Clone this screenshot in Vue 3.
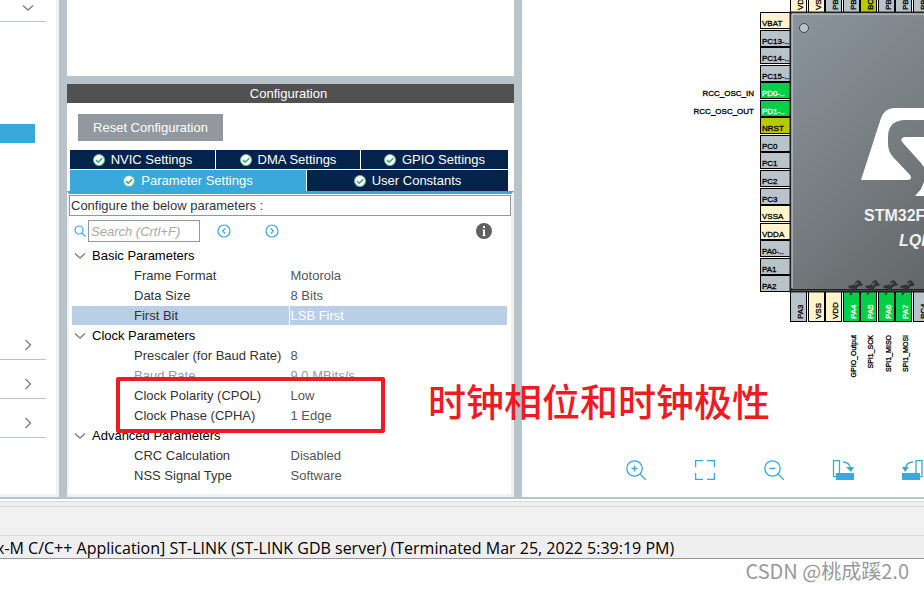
<script setup>
import { ref } from 'vue'

const search = ref('')
const selected = ref('First Bit')

const sections = ['Connectivity', 'Computing', 'Middleware']

const topTabs = ['NVIC Settings', 'DMA Settings', 'GPIO Settings']
const mainTabs = ['Parameter Settings', 'User Constants']
const activeTab = ref('Parameter Settings')

const groups = [
  {
    name: 'Basic Parameters',
    params: [
      { name: 'Frame Format', value: 'Motorola' },
      { name: 'Data Size', value: '8 Bits' },
      { name: 'First Bit', value: 'LSB First' }
    ]
  },
  {
    name: 'Clock Parameters',
    params: [
      { name: 'Prescaler (for Baud Rate)', value: '8' },
      { name: 'Baud Rate', value: '9.0 MBits/s', disabled: true },
      { name: 'Clock Polarity (CPOL)', value: 'Low' },
      { name: 'Clock Phase (CPHA)', value: '1 Edge' }
    ]
  },
  {
    name: 'Advanced Parameters',
    params: [
      { name: 'CRC Calculation', value: 'Disabled' },
      { name: 'NSS Signal Type', value: 'Software' }
    ]
  }
]

const leftPins = [
  { name: 'VBAT', type: 'power' },
  { name: 'PC13-..' },
  { name: 'PC14-..' },
  { name: 'PC15-..' },
  { name: 'PD0-..', type: 'used', label: 'RCC_OSC_IN' },
  { name: 'PD1-..', type: 'used', label: 'RCC_OSC_OUT' },
  { name: 'NRST', type: 'reset' },
  { name: 'PC0' },
  { name: 'PC1' },
  { name: 'PC2' },
  { name: 'PC3' },
  { name: 'VSSA', type: 'power' },
  { name: 'VDDA', type: 'power' },
  { name: 'PA0-..' },
  { name: 'PA1' },
  { name: 'PA2' }
]

const topPins = [
  { name: 'VDD', type: 'power' },
  { name: 'VSS', type: 'power' },
  { name: 'PB9' },
  { name: 'PB8' },
  { name: 'BOOT0', type: 'reset' },
  { name: 'PB7' },
  { name: 'PB6' },
  { name: 'PB5' }
]

const bottomPins = [
  { name: 'PA3' },
  { name: 'VSS', type: 'power' },
  { name: 'VDD', type: 'power' },
  { name: 'PA4', type: 'used', label: 'GPIO_Output' },
  { name: 'PA5', type: 'used', label: 'SPI1_SCK' },
  { name: 'PA6', type: 'used', label: 'SPI1_MISO' },
  { name: 'PA7', type: 'used', label: 'SPI1_MOSI' },
  { name: 'PC4' }
]

// distance of pin n from the chip corner
function offset(n) {
  return Math.round(n * 17.55)
}
</script>

<template>
  <div class="ide">
    <main class="workbench">
      <nav class="categories">
        <div class="category open">
          <button type="button" aria-label="System Core">
            <svg width="12" height="8" viewBox="0 0 12 8"><path d="M1 1.5l5 4.500l5-4.500" /></svg>
          </button>
        </div>
        <div class="categoryBody">
          <div class="currentItem"></div>
        </div>
        <div v-for="s in sections" :key="s" class="category">
          <button type="button" :aria-label="s">
            <svg width="8" height="12" viewBox="0 0 8 12"><path d="M1.500 1l5 5l-5 5" /></svg>
          </button>
        </div>
      </nav>

      <section class="middle">
        <div class="modePane"></div>
        <h2 class="paneTitle">Configuration</h2>
        <div class="config">
          <button type="button" class="reset">Reset Configuration</button>
          <div class="tabs">
            <div class="tabRow upper">
              <button v-for="t in topTabs" :key="t" type="button" class="tab" :class="{ active: t == activeTab }" @click="activeTab = t">
                <svg class="check" width="12" height="12" viewBox="0 0 12 12">
                  <circle cx="6" cy="6" r="5.500" />
                  <path d="M3 6l2.200 2.200l4-4" />
                </svg>
                {{ t }}
              </button>
            </div>
            <div class="tabRow lower">
              <button v-for="t in mainTabs" :key="t" type="button" class="tab" :class="{ active: t == activeTab }" @click="activeTab = t">
                <svg class="check" width="12" height="12" viewBox="0 0 12 12">
                  <circle cx="6" cy="6" r="5.500" />
                  <path d="M3 6l2.200 2.200l4-4" />
                </svg>
                {{ t }}
              </button>
            </div>
          </div>
          <div class="tabPage">
            <p class="hint">Configure the below parameters :</p>
            <div class="searchRow">
              <label for="search" aria-label="Search">
                <svg width="12" height="12" viewBox="0 0 12 12">
                  <circle cx="5" cy="5" r="4" /><path d="M8 8l3.500 3.500" />
                </svg>
              </label>
              <input id="search" v-model="search" type="text" placeholder="Search (Crtl+F)">
              <button type="button" class="step" aria-label="Previous">
                <svg width="14" height="14" viewBox="0 0 14 14"><circle cx="7" cy="7" r="6" /><path d="M8.200 4.500l-2.500 2.500l2.500 2.500" /></svg>
              </button>
              <button type="button" class="step" aria-label="Next">
                <svg width="14" height="14" viewBox="0 0 14 14"><circle cx="7" cy="7" r="6" /><path d="M5.800 4.500l2.500 2.500l-2.500 2.500" /></svg>
              </button>
              <button type="button" class="info" aria-label="Information">
                <svg width="16" height="16" viewBox="0 0 16 16">
                  <circle cx="8" cy="8" r="8" /><path d="M7 3h2v2h-2zM6.500 6.500h2.500v5.500h.5v1h-3v-1h.5v-4.500h-.5z" />
                </svg>
              </button>
            </div>
            <table class="params">
              <tbody v-for="g in groups" :key="g.name">
                <tr>
                  <th colspan="2">
                    <svg width="12" height="8" viewBox="0 0 12 8"><path d="M1 1.500l5 4.500l5-4.500" /></svg>
                    {{ g.name }}
                  </th>
                </tr>
                <tr v-for="p in g.params" :key="p.name" :class="{ selected: p.name == selected, disabled: p.disabled }" @click="selected = p.name">
                  <td class="name">{{ p.name }}</td>
                  <td>{{ p.value }}</td>
                </tr>
              </tbody>
            </table>
          </div>
        </div>
      </section>

      <section class="pinout">
        <svg class="chipView" width="402" height="440" viewBox="0 0 402 440">
          <defs>
            <linearGradient id="body" gradientUnits="userSpaceOnUse" x1="0" y1="0" x2="270" y2="290">
              <stop offset="0" stop-color="#8b959e" />
              <stop offset="0.400" stop-color="#777e81" />
              <stop offset="1" stop-color="#525554" />
            </linearGradient>
          </defs>
          <g transform="translate(268 12)">
            <g v-for="(pin, i) in leftPins" :key="'l' + i" :class="['pin', pin.type]" :transform="`translate(-30 ${offset(i)})`">
              <rect x="0.500" y="0.500" width="30" height="16" />
              <text x="2" y="14">{{ pin.name }}</text>
              <text v-if="pin.label" class="signal" x="-6" y="14" text-anchor="end">{{ pin.label }}</text>
            </g>
            <g v-for="(pin, i) in topPins" :key="'t' + i" :class="['pin', pin.type]" :transform="`translate(${offset(i)} -30)`">
              <rect x="0.500" y="0.500" width="16" height="30" />
              <text transform="translate(13 28) rotate(-90)">{{ pin.name }}</text>
            </g>
            <g v-for="(pin, i) in bottomPins" :key="'b' + i" :class="['pin', pin.type]" :transform="`translate(${offset(i)} 280)`">
              <rect x="0.500" y="-0.500" width="16" height="30" />
              <text transform="translate(13 27) rotate(-90)">{{ pin.name }}</text>
              <text v-if="pin.label" class="signal small" transform="translate(13 43) rotate(-90)" text-anchor="end">{{ pin.label }}</text>
            </g>
            <rect class="body" x="0.500" y="0.500" width="280" height="279" />
            <path class="edge" d="M2 276V2H140" />
            <path class="shade" d="M1 277.500H140" />
            <circle class="mark" cx="14" cy="16" r="4.500" />
            <g class="logo">
              <path d="M160 96H104Q95 96 91 106L71 168H117Q123 168 120 163L103 145Q98 139 98 132V125Q98 109 114 108H160Z" />
              <path d="M160 125H115Q109 126 113 131L131 151L136 158H160Z" />
              <path d="M125 184L131 177L134 170V184Z" />
            </g>
            <text class="partName" x="74" y="209">STM32F103RCTx</text>
            <text class="package" x="109" y="234">LQFP64</text>
            <!-- pushpins on the signals that are locked to a pin -->
            <template v-for="(pin, i) in bottomPins" :key="'p' + i">
              <g v-if="pin.label" class="pushpin" :transform="`translate(${offset(i) + 8} 269)`">
                <path class="needle" d="M-1 14L4 7" />
                <path d="M-3 5L2 4L4 3L5 0L8 -1L12 4L10 5L8 5L6 7L6 11L3 8L-2 7Z" />
                <path class="shine" d="M4 4L7 2" />
              </g>
            </template>
          </g>
        </svg>
        <div class="viewTools">
          <button type="button" aria-label="Zoom in">
            <svg width="20" height="20" viewBox="0 0 20 20"><circle cx="8.500" cy="8.500" r="7.700" /><path d="M14 14l6 6M5.500 8.500h6M8.500 5.500v6" /></svg>
          </button>
          <button type="button" aria-label="Best fit">
            <svg width="20" height="20" viewBox="0 0 20 20"><path d="M.6 7V.6H8M12 .6H19.400V7M19.400 13V19.400H12M8 19.400H.6V13" /></svg>
          </button>
          <button type="button" aria-label="Zoom out">
            <svg width="20" height="20" viewBox="0 0 20 20"><circle cx="8.500" cy="8.500" r="7.700" /><path d="M14 14l6 6M5.500 8.500h6" /></svg>
          </button>
          <button type="button" aria-label="Rotate clockwise">
            <svg width="22" height="20" viewBox="0 0 22 20">
              <path d="M1.500 .6h6v16h-6zM11 2q6 0 7.500 6" /><path class="solid" d="M4 13h18v7h-18zM14 7h8l-3 5z" />
            </svg>
          </button>
          <button type="button" aria-label="Rotate counter-clockwise">
            <svg width="22" height="20" viewBox="0 0 22 20">
              <path d="M15 .6h6v16h-6zM12 2q-6 0-7.500 6" /><path class="solid" d="M1 13h18v7h-18zM1 7h7l-4 5z" />
            </svg>
          </button>
        </div>
      </section>

      <div class="marker"></div>
      <p class="note">时钟相位和时钟极性</p>
    </main>

    <footer class="console">
      <div class="consoleBar"></div>
      <p class="launch">x-M C/C++ Application] ST-LINK (ST-LINK GDB server) (Terminated Mar 25, 2022 5:39:19 PM)</p>
      <p class="watermark">CSDN @桃成蹊2.0</p>
    </footer>
  </div>
</template>

<style>
body {
    margin: 0;
    background: #fff;
}
</style>

<style scoped>
.ide {
    overflow: hidden;
    font: 13px/20px "Liberation Sans", Arial, sans-serif;
    color: #333;
}

.ide * {
    box-sizing: border-box;
}

button {
    display: flex;
    align-items: center;
    justify-content: center;
    padding: 0;
    border: 0;
    background: none;
    font: inherit;
    color: inherit;
}

p, h2 {
    margin: 0;
}

svg {
    display: block;
    flex: none;
    fill: none;
}

.workbench {
    position: relative;
    display: flex;
    border-bottom: 2px solid #b8c4ca;
}

.categories {
    display: flex;
    flex-direction: column;
    flex: 0 0 59px;
    padding-right: 10px;
    border-right: 3px solid #eff1f2;
    border-bottom: 3px solid #eff1f2;
    stroke: #808080;
    stroke-width: 1.4;
}

.category {
    display: flex;
    align-items: center;
    justify-content: flex-end;
    height: 39px;
    padding: 10px 14px 0 0;
    border-bottom: 1px solid #b8c4ca;
}

.category.open {
    height: 22px;
    padding: 0 12px 6px 0;
}

.categoryBody {
    height: 299px;
    padding-top: 102px;
}

.currentItem {
    width: 35px;
    height: 19px;
    background: #39a9dc;
}

.middle {
    flex: 0 0 463px;
    border-left: 8px solid #b8c4ca;
    border-right: 8px solid #b8c4ca;
}

.modePane {
    height: 84px;
    border-bottom: 8px solid #b8c4ca;
}

.paneTitle {
    height: 19px;
    padding-right: 4px;
    background: #515151;
    color: #fff;
    font-size: 13px;
    font-weight: normal;
    text-align: center;
}

.config {
    padding-top: 11px;
}

.reset {
    width: 145px;
    height: 27px;
    margin-left: 11px;
    background: #91989e;
    color: #fff;
}

.tabs {
    margin-top: 9px;
    padding: 0 6px 0 3px;
}

.tabRow {
    display: grid;
    gap: 1px;
    margin-bottom: 1px;
}

.upper {
    grid-template-columns: 145fr 144fr 147fr;
}

.lower {
    grid-template-columns: 236fr 201fr;
    margin-bottom: 0;
}

.tab {
    gap: 6px;
    height: 19px;
    background: #03234b;
    color: #fff;
}

.lower .tab {
    height: 21px;
}

.tab.active {
    background: #39a9dc;
}

.check circle {
    fill: #fff;
    stroke: #5fb98a;
}

.check path {
    stroke: #3d9f6c;
    stroke-width: 1.5;
}

.tabPage {
    padding: 1px 0 8px;
    border: solid #eff1f2;
    border-width: 3px 3px 3px 2px;
    border-top-color: #39a9dc;
}

.hint {
    height: 21px;
    padding-left: 1px;
    border: 1px solid #91989e;
}

.searchRow {
    display: flex;
    align-items: center;
    height: 30px;
    padding: 0 19px 0 5px;
    stroke: #39a9dc;
    stroke-width: 1.2;
}

.searchRow input {
    width: 112px;
    height: 22px;
    margin: 0 17px 0 2px;
    padding: 0 2px;
    border: 1px solid #91989e;
    font: italic 13px "Liberation Sans", Arial, sans-serif;
    outline: none;
}

.searchRow input::placeholder {
    color: #a8a8a8;
}

.step {
    margin-right: 34px;
}

.info {
    margin-left: auto;
    stroke: none;
}

.info circle {
    fill: #606060;
}

.info path {
    fill: #fff;
}

.params {
    width: calc(100% - 7px);
    margin-left: 3px;
    table-layout: fixed;
    border-collapse: separate;
    border-spacing: 0;
}

.params th, .params td {
    height: 20px;
    padding: 0;
    line-height: 19px;
    font-weight: normal;
    text-align: left;
    white-space: nowrap;
    border-bottom: 1px solid #fff;
    color: #555;
}

.params th {
    padding-left: 20px;
    color: #000;
}

.params th svg {
    float: left;
    margin: 6px 0 0 -18px;
    stroke: #808080;
    stroke-width: 1.4;
}

.params .name {
    width: 50%;
    padding-left: 62px;
    border-right: 1px solid #fff;
    color: #333;
}

.params td + td {
    padding-left: 1px;
}

.params .selected td {
    background: #b9cfe7;
}

.params .selected td + td {
    color: #fff;
}

.params .disabled td {
    color: #999;
}

.pinout {
    flex: 1;
    min-width: 0;
    overflow: hidden;
}

.pin rect {
    fill: #b8c4ca;
    stroke: #000;
}

.pin.power rect {
    fill: #fff4cc;
}

.pin.used rect {
    fill: #00d046;
}

.pin.reset rect {
    fill: #b9c900;
}

.pin text {
    fill: #000;
    stroke: #000;
    stroke-width: 0.3;
    font-size: 8px;
}

.pin.used text {
    fill: #fff;
    stroke: #fff;
}

.pin.used .signal {
    fill: #000;
    stroke: #000;
}

.pin .small {
    font-size: 7px;
}

.body {
    fill: url(#body);
    stroke: #222;
    stroke-width: 2;
}

.edge {
    stroke: #d8dcde;
}

.shade {
    stroke: #222;
}

.mark {
    fill: #b8c4ca;
    stroke: #444;
}

.logo {
    fill: #fff;
}

.partName, .package {
    fill: #f0f0f0;
    font-size: 16px;
    font-weight: bold;
}

.package {
    font-style: italic;
}

.pushpin {
    fill: #333;
}

.needle {
    stroke: #333;
    stroke-width: 1.5;
}

.shine {
    stroke: #888;
}

.viewTools {
    display: flex;
    align-items: center;
    gap: 49px;
    padding: 20px 0 17px 104px;
    stroke: #39a9dc;
    stroke-width: 1.3;
}

.viewTools button {
    flex: 0 0 20px;
    min-width: 0;
    height: 20px;
}

.solid {
    fill: #39a9dc;
    stroke: none;
}

/* red frame drawn over the clock settings */
.marker {
    position: absolute;
    left: 116px;
    top: 377px;
    width: 269px;
    height: 56px;
    border: 4px solid #ed1c24;
    border-radius: 2px;
}

.note {
    position: absolute;
    left: 428px;
    top: 376px;
    font: 500 38px/48px "Noto Sans CJK SC", sans-serif;
    color: #ed1c24;
    white-space: nowrap;
}

.console {
    margin-top: 2px;
    border-top: 1px solid #d8d8d8;
}

.consoleBar {
    height: 34px;
    border-top: 4px solid #efefef;
    border-bottom: 1px solid #d8d8d8;
    background: linear-gradient(#d8d8d8 1px, #f1f1f1 1px);
}

/* the title runs out of the window on the left */
.launch {
    height: 23px;
    margin-left: -4px;
    border-bottom: 1px solid #999;
    background: #efefef;
    color: #000;
    font: 16px/24px "Open Sans", "Noto Sans", sans-serif;
    white-space: nowrap;
}

.watermark {
    padding-right: 15px;
    font: 20px/24px "Noto Sans CJK SC", sans-serif;
    color: #999;
    text-align: right;
}
</style>
